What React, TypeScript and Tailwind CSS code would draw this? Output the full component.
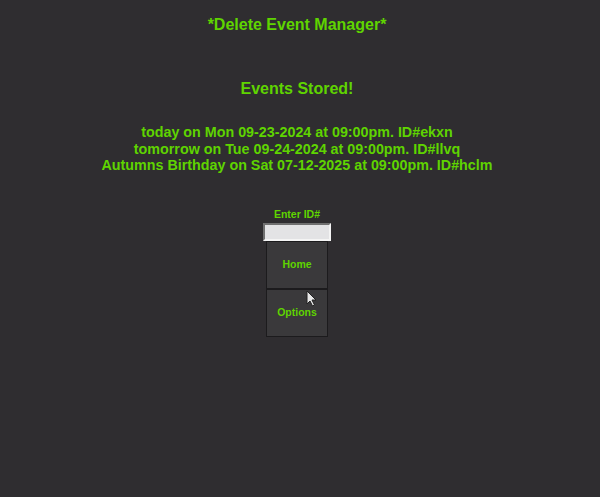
import React from "react";

export default function App() {
  const green = "text-[#5fd400]";
  return (
    <div className="w-[600px] h-[497px] bg-[#2f2d30] pr-[6px] flex flex-col items-center font-['Liberation_Sans',Arial,sans-serif] font-bold relative overflow-hidden">
      <div className={`${green} text-[16px] leading-[18px] mt-[16px]`}>*Delete Event Manager*</div>
      <div className={`${green} text-[16px] leading-[18px] mt-[46px]`}>Events Stored!</div>
      <div className={`${green} text-[14.3px] leading-[16.5px] mt-[26px] text-center`}>
        <div>today on Mon 09-23-2024 at 09:00pm. ID#ekxn</div>
        <div>tomorrow on Tue 09-24-2024 at 09:00pm. ID#llvq</div>
        <div>Autumns Birthday on Sat 07-12-2025 at 09:00pm. ID#hclm</div>
      </div>
      <div className={`${green} text-[10.5px] leading-[12px] mt-[34px]`}>Enter ID#</div>
      <div className="mt-[3px] w-[68px] h-[18px] bg-[#e3e3e5] border-2 border-t-[#707070] border-l-[#707070] border-r-[#f4f4f4] border-b-[#f4f4f4]" />
      <div className="w-[62px] flex flex-col">
        <div className={`h-[48px] bg-[#3a393b] border border-[#1c1b1d] flex items-center justify-center ${green} text-[10.5px]`}>Home</div>
        <div className={`h-[48px] bg-[#3a393b] border border-[#1c1b1d] flex items-center justify-center ${green} text-[10.5px]`}>Options</div>
      </div>
      <svg className="absolute left-[306px] top-[290px]" width="12" height="18" viewBox="0 0 12 18">
        <path d="M1 1 L1 14 L4 11 L6.5 16 L8.5 15 L6 10 L10 10 Z" fill="#e8e8e8" stroke="#222" strokeWidth="1" />
      </svg>
    </div>
  );
}
